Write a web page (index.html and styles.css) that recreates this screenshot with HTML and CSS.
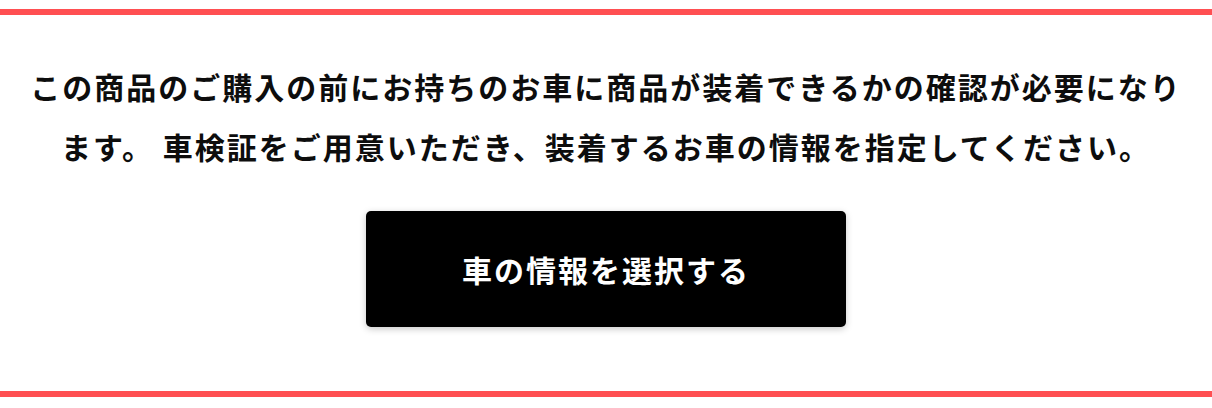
FILE: index.html
```html
<!DOCTYPE html>
<html lang="ja">
<head>
<meta charset="utf-8">
<title>車の情報を選択</title>
<link rel="stylesheet" href="styles.css">
</head>
<body>
<section class="notice">
  <p class="notice-text">この商品のご購入の前にお持ちのお車に商品が装着できるかの確認が必要になります。 車検証をご用意いただき、装着するお車の情報を指定してください。</p>
  <button class="select-btn" type="button">車の情報を選択する</button>
</section>
</body>
</html>
```

FILE: styles.css
```css
html, body {
  margin: 0;
  padding: 0;
  background: #fff;
}

body {
  font-family: "Noto Sans CJK JP", "Noto Sans", sans-serif;
  color: #0d0d0d;
}

.notice {
  margin: 9px 0 11px;
  border-top: 6px solid #ff4f52;
  border-bottom: 6px solid #ff4f52;
  padding: 41px 26px 64px;
  display: flex;
  flex-direction: column;
  align-items: center;
}

.notice-text {
  margin: 0;
  font-size: 30px;
  font-weight: 700;
  line-height: 60px;
  letter-spacing: 2px;
  text-align: center;
}

.select-btn {
  margin-top: 35px;
  width: 480px;
  height: 116px;
  border: none;
  border-radius: 5px;
  background: #000;
  color: #fff;
  font-family: inherit;
  font-size: 30px;
  font-weight: 700;
  letter-spacing: 2px;
  box-shadow: 0 2px 7px rgba(0, 0, 0, 0.22);
  cursor: pointer;
}
```
